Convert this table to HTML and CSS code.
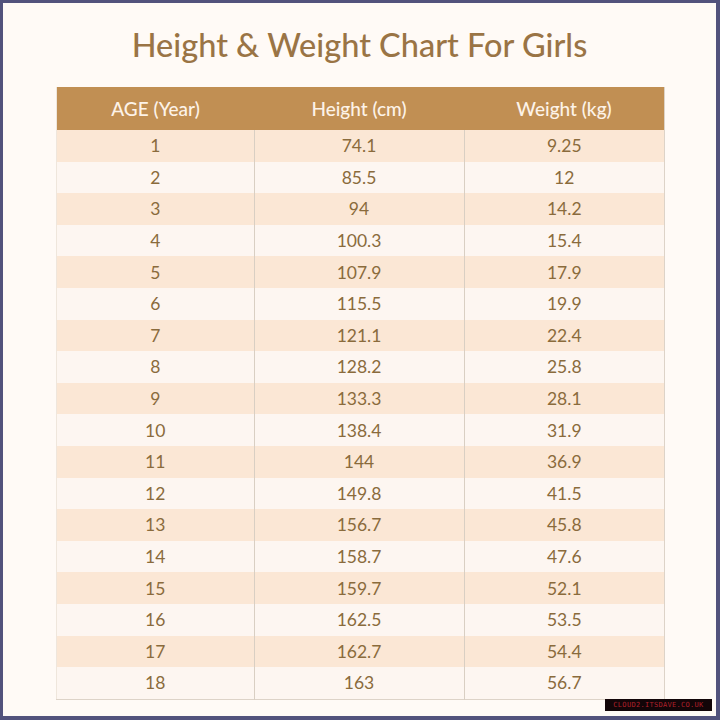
FILE: index.html
```html
<!DOCTYPE html>
<html>
<head>
<meta charset="utf-8">
<link rel="stylesheet" href="styles.css">
</head>
<body>
<div class="frame">
  <h1 class="title">Height &amp; Weight Chart For Girls</h1>
  <table class="chart">
    <thead>
      <tr><th class="c1">AGE (Year)</th><th class="c2">Height (cm)</th><th class="c3">Weight (kg)</th></tr>
    </thead>
    <tbody>
      <tr><td>1</td><td>74.1</td><td>9.25</td></tr>
      <tr><td>2</td><td>85.5</td><td>12</td></tr>
      <tr><td>3</td><td>94</td><td>14.2</td></tr>
      <tr><td>4</td><td>100.3</td><td>15.4</td></tr>
      <tr><td>5</td><td>107.9</td><td>17.9</td></tr>
      <tr><td>6</td><td>115.5</td><td>19.9</td></tr>
      <tr><td>7</td><td>121.1</td><td>22.4</td></tr>
      <tr><td>8</td><td>128.2</td><td>25.8</td></tr>
      <tr><td>9</td><td>133.3</td><td>28.1</td></tr>
      <tr><td>10</td><td>138.4</td><td>31.9</td></tr>
      <tr><td>11</td><td>144</td><td>36.9</td></tr>
      <tr><td>12</td><td>149.8</td><td>41.5</td></tr>
      <tr><td>13</td><td>156.7</td><td>45.8</td></tr>
      <tr><td>14</td><td>158.7</td><td>47.6</td></tr>
      <tr><td>15</td><td>159.7</td><td>52.1</td></tr>
      <tr><td>16</td><td>162.5</td><td>53.5</td></tr>
      <tr><td>17</td><td>162.7</td><td>54.4</td></tr>
      <tr><td>18</td><td>163</td><td>56.7</td></tr>
    </tbody>
  </table>
  <div class="watermark">CLOUD2.ITSDAVE.CO.UK</div>
</div>
</body>
</html>
```
FILE: styles.css
```css
html, body {
  margin: 0;
  padding: 0;
  background: #52527c;
}
.frame {
  position: relative;
  box-sizing: border-box;
  width: 720px;
  height: 720px;
  border-style: solid;
  border-color: #52527c;
  border-width: 3px 4px 4px 3px;
  background: #fffaf6;
  padding: 0 0 0 53px;
  font-family: Lato, "Open Sans", sans-serif;
}
.title {
  margin: 0;
  width: 607px;
  height: 84px;
  padding-top: 22px;
  box-sizing: border-box;
  text-align: center;
  font-size: 32.5px;
  font-weight: 500;
  color: #9a7445;
  line-height: 40px;
}
.chart {
  border-collapse: collapse;
  width: 607px;
  table-layout: fixed;
  border-right: 1px solid #ddd3c8;
  border-bottom: 1px solid #ddd3c8;
  border-left: 1px solid #efe6dc;
}
.c1 { width: 197px; }
.c2 { width: 210px; }
.c3 { width: 200px; }
.chart th {
  background: #c18f53;
  color: #fdf3e8;
  height: 43px;
  padding: 0;
  font-weight: 500;
  font-size: 19px;
}
.chart td {
  height: 31.6px;
  padding: 0;
  text-align: center;
  font-size: 17.5px;
  color: #8a6b3c;
  border-right: 1px solid #d9cfc3;
}
.chart td:last-child { border-right: none; }
.chart tbody tr:nth-child(odd) { background: #fbe7d5; }
.chart tbody tr:nth-child(even) { background: #fdf6f1; }
.watermark {
  position: absolute;
  left: 602px;
  top: 696px;
  width: 107px;
  height: 12px;
  background: #120508;
  color: #b0202a;
  font-family: "DejaVu Sans Mono", monospace;
  font-size: 7px;
  line-height: 12px;
  text-align: center;
  letter-spacing: 0.3px;
}
```
